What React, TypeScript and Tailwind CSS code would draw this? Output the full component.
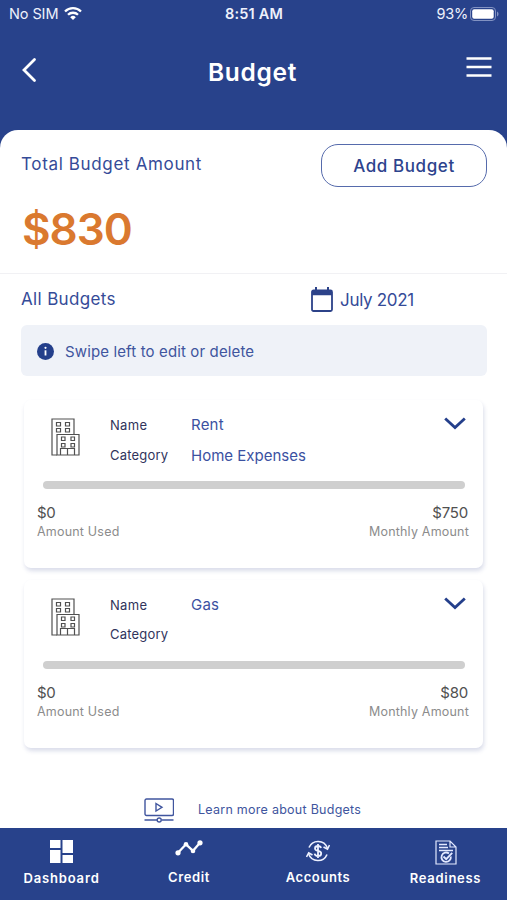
import React from "react";

function Wifi() {
  return (
    <svg width="18" height="14" viewBox="0 0 18 14" fill="none" stroke="white" strokeWidth="2.3" className="ml-[6px]">
      <path d="M1 4.500a11.4 11.4 0 0 1 16 0" />
      <path d="M4 7.800a7.1 7.1 0 0 1 10 0" />
      <path d="M9 13 6.2 10.200a4 4 0 0 1 5.6 0z" fill="white" stroke="none" />
    </svg>
  );
}

function Building() {
  return (
    <svg width="29" height="38" viewBox="0 0 29 38" fill="none" stroke="#505050" strokeWidth="1.2">
      <path d="M6 37H1V1h22v15.5" />
      <path d="M6 37V16.500h22V37z" />
      <path d="M9.500 37v-6.500h14V37M16.500 30.500V37" />
      <path d="M5.500 4.500h4v3.500h-4zM14.500 4.500h4v3.500h-4zM5.500 10.500h4v3.500h-4zM14.500 10.500h4v3.500h-4z" />
      <path d="M10.500 19h3.500v3.500h-3.500zM20 19h3.500v3.500H20zM10.500 25.500h3.500v3.500h-3.500zM20 25.500h3.500v3.500H20z" />
    </svg>
  );
}

type Budget = { name: string; category: string; amount: string };

function BudgetCard({ name, category, amount }: Budget) {
  return (
    <section className="mx-[24px] flex h-[168px] flex-col rounded-[7px] bg-white pl-[13px] pr-[14px] shadow-[1px_3px_4px_rgba(70,85,150,0.2)]">
      <div className="flex h-[81px]">
        <div className="w-[73px] pl-[14px] pt-[18px]">
          <Building />
        </div>
        <div className="w-[81px] pt-[15px] text-[13px] leading-[20px] text-[#30345c]">
          <div className="tracking-[0.3px]">Name</div>
          <div className={category ? "mt-[10px] tracking-[0.2px]" : "mt-[9px] tracking-[0.2px]"}>Category</div>
        </div>
        <div className="flex-1 whitespace-nowrap pt-[15px] text-[15px] leading-[20px] text-[#3b51a1]">
          <div className="tracking-[0.2px]">{name}</div>
          <div className="mt-[11px]">{category}</div>
        </div>
        <svg width="22" height="13" viewBox="0 0 22 13" fill="none" stroke="#243f8b" strokeWidth="2.800" className="mr-[3px] mt-[17px]">
          <path d="m1.200 1.500 9.800 9 9.800-9" />
        </svg>
      </div>
      <div className="ml-[6px] mr-[4px] h-[8px] rounded-full bg-[#cfcfcf]" />
      <div className="mt-[14px] flex justify-between text-[15px] leading-[20px] text-[#505050]">
        <span className="tracking-[-0.3px]">$0</span>
        <span className="pr-px tracking-[-0.2px]">{amount}</span>
      </div>
      <div className="-mt-px flex justify-between text-[12.500px] leading-[20px] text-[#8c8c8c]">
        <span className="tracking-[0.2px]">Amount Used</span>
        <span className="tracking-[0.2px]">Monthly Amount</span>
      </div>
    </section>
  );
}

function DashboardIcon() {
  return (
    <svg width="23" height="23" viewBox="0 0 23 23" fill="white">
      <path d="M0 0h10.500v8H0zM12.500 0H23v13H12.500zM0 10h10.500v13H0zM12.500 15H23v8H12.500z" />
    </svg>
  );
}

function CreditIcon() {
  return (
    <svg width="28" height="16" viewBox="0 0 28 16" fill="white">
      <path d="m3 12.800 8-8.500 7 6.500 7-8" fill="none" stroke="white" strokeWidth="2.300" />
      <circle cx="3" cy="12.800" r="2.600" />
      <circle cx="11" cy="4.200" r="2.300" />
      <circle cx="18" cy="11" r="2.300" />
      <circle cx="25" cy="2.800" r="2.600" />
    </svg>
  );
}

function AccountsIcon() {
  return (
    <svg width="24" height="22" viewBox="0 0 24 22" fill="none" stroke="#edf1ff" strokeWidth="1.600">
      <path d="M3 7.500a9.800 9.800 0 0 1 18.300.500M21 14.500a9.800 9.800 0 0 1-18.300-.500" />
      <path d="m17.500 7 4 2.200L23.500 5M.500 17l2.200-4.200L6.500 15" />
      <path d="M15 8c-.3-1.400-1.500-2-3-2-1.800 0-3 .9-3 2.400 0 3.400 6.200 1.700 6.200 5 0 1.600-1.300 2.600-3.200 2.600s-3.200-.8-3.400-2.300M12 4v14" strokeWidth="1.800" />
    </svg>
  );
}

function ReadinessIcon() {
  return (
    <svg width="22" height="25" viewBox="0 0 22 25" fill="none" stroke="#e3e9ff" strokeWidth="1.200">
      <path d="M1 1h14l6 6v17H1zM15 1v6h6" />
      <path d="M4 4.500h8M4 7.500h9M4 10.500h14" strokeWidth="1.500" />
      <path d="M14 13.500a4.700 4.700 0 1 0 1.800 3" strokeWidth="1.800" />
      <path d="m8.500 16.500 2.700 2.600 6-6.200" strokeWidth="1.900" />
    </svg>
  );
}

export default function App() {
  return (
    <main className="flex h-[900px] w-[507px] flex-col overflow-hidden bg-[#28428b] font-['Inter',sans-serif]">
      <div className="grid h-[28px] grid-cols-3 items-center pl-[9px] pr-[8px] text-[14.500px] text-[#eef1fb]">
        <div className="flex items-center whitespace-nowrap tracking-[-0.1px]">
          No SIM
          <Wifi />
        </div>
        <div className="text-center font-semibold tracking-[0.2px]">8:51 AM</div>
        <div className="flex items-center justify-end tracking-[-0.2px]">
          93%
          <svg width="29" height="14" viewBox="0 0 29 14" fill="none" className="ml-[2px]">
            <rect x=".5" y=".5" width="25" height="13" rx="3.500" stroke="#8292c2" />
            <rect x="2.200" y="2.200" width="21.500" height="9.600" rx="2" fill="white" />
            <path d="M27 4.500c2 .8 2 4.200 0 5z" fill="#8292c2" />
          </svg>
        </div>
      </div>
      <header className="flex h-[102px] items-start justify-between pl-[21px] pr-[15px]">
        <svg width="26" height="26" viewBox="0 0 26 26" fill="none" stroke="white" strokeWidth="2.800" strokeLinecap="round" className="mt-[29px]">
          <path d="M13.500 2.500 3 13l10.500 10.500" />
        </svg>
        <h1 className="mr-[8px] mt-[28px] text-[24.500px] font-semibold leading-[32px] tracking-[0.7px] text-white">Budget</h1>
        <svg width="26" height="22" viewBox="0 0 26 22" stroke="white" strokeWidth="2.300" className="mt-[28px]">
          <path d="M.5 2.500h25M.5 11h25M.5 19.500h25" />
        </svg>
      </header>

      <div className="flex h-[698px] flex-col rounded-t-[18px] bg-white">
        <div className="flex h-[56px] items-start justify-between pl-[21px] pr-[20px] pt-[14px] text-[#354b98]">
          <span className="mt-[10px] text-[17px] leading-[20px] tracking-[0.65px]">Total Budget Amount</span>
          <button className="h-[43px] w-[166px] rounded-[17px] border-[1.500px] border-[#566bac] text-[17px] font-medium leading-[20px] tracking-[0.600px] text-[#2d438d]">
            Add Budget
          </button>
        </div>
        <div className="h-[88px] border-b border-[#f1f1f4] pl-[22px] pt-[18px] text-[44px] font-semibold leading-[50px] tracking-[-1px] text-[#da792f]">$830</div>
        <div className="flex h-[51px] items-start pl-[21px] pt-[13px] text-[17px] leading-[24px] text-[#354b98]">
          <span className="w-[290px] tracking-[0.350px]">All Budgets</span>
          <svg width="22" height="25" viewBox="0 0 22 25" fill="none" stroke="#2c4289" strokeWidth="1.800">
            <rect x="1" y="3.500" width="20" height="20.500" rx="1.500" />
            <path d="M1 6h20" strokeWidth="4.500" />
            <path d="M5 0v4M17 0v4" strokeWidth="2" />
          </svg>
          <span className="ml-[7px] mt-px tracking-[-0.3px]">July 2021</span>
        </div>
        <div className="ml-[21px] mr-[20px] flex h-[51px] items-center rounded-[6px] bg-[#eff2f8] pl-[16px] pt-[2px] text-[#40559e]">
          <svg width="17" height="17" viewBox="0 0 17 17">
            <circle cx="8.500" cy="8.500" r="8.500" fill="#243f8b" />
            <path d="M8.500 7.300v5.200" stroke="white" strokeWidth="1.800" />
            <circle cx="8.500" cy="4.800" r="1.100" fill="white" />
          </svg>
          <span className="ml-[11px] text-[15px] leading-[20px] tracking-[0.130px]">Swipe left to edit or delete</span>
        </div>
        <div className="mt-[24px] flex flex-col gap-[12px]">
          <BudgetCard name="Rent" category="Home Expenses" amount="$750" />
          <BudgetCard name="Gas" category="" amount="$80" />
        </div>
        <div className="mt-[50px] flex items-start pl-[144px] text-[#40559e]">
          <svg width="30" height="25" viewBox="0 0 30 25" fill="none" stroke="currentColor" strokeWidth="1.400">
            <rect x="1" y="1" width="28.500" height="16.500" rx="1.500" />
            <path d="m12 5.500 6 3.800-6 3.700z" />
            <path d="M.5 22H13M17.500 22h12" />
            <circle cx="15.200" cy="22" r="2" />
          </svg>
          <span className="ml-[24px] mt-[2px] text-[12.500px] leading-[20px] tracking-[0.260px]">Learn more about Budgets</span>
        </div>
      </div>

      <nav className="flex h-[72px] shrink-0 text-[13px] font-semibold leading-[16px] text-white">
        <div className="flex w-[122px] flex-col items-center pt-[12px]">
          <DashboardIcon />
          <span className="mt-[7px] tracking-[0.900px]">
            <span className="-mr-px tracking-[0.850px]">Dashboard</span>
          </span>
        </div>
        <div className="flex w-[134px] flex-col items-center pt-[12px]">
          <CreditIcon />
          <span className="mt-[13px] tracking-[0.600px]">Credit</span>
        </div>
        <div className="flex w-[124px] flex-col items-center pt-[12px]">
          <AccountsIcon />
          <span className="mt-[7px] tracking-[0.600px]">Accounts</span>
        </div>
        <div className="flex w-[127px] flex-col items-center pl-[4px] pt-[12px]">
          <ReadinessIcon />
          <span className="mt-[5px] tracking-[0.700px]">Readiness</span>
        </div>
      </nav>
    </main>
  );
}
